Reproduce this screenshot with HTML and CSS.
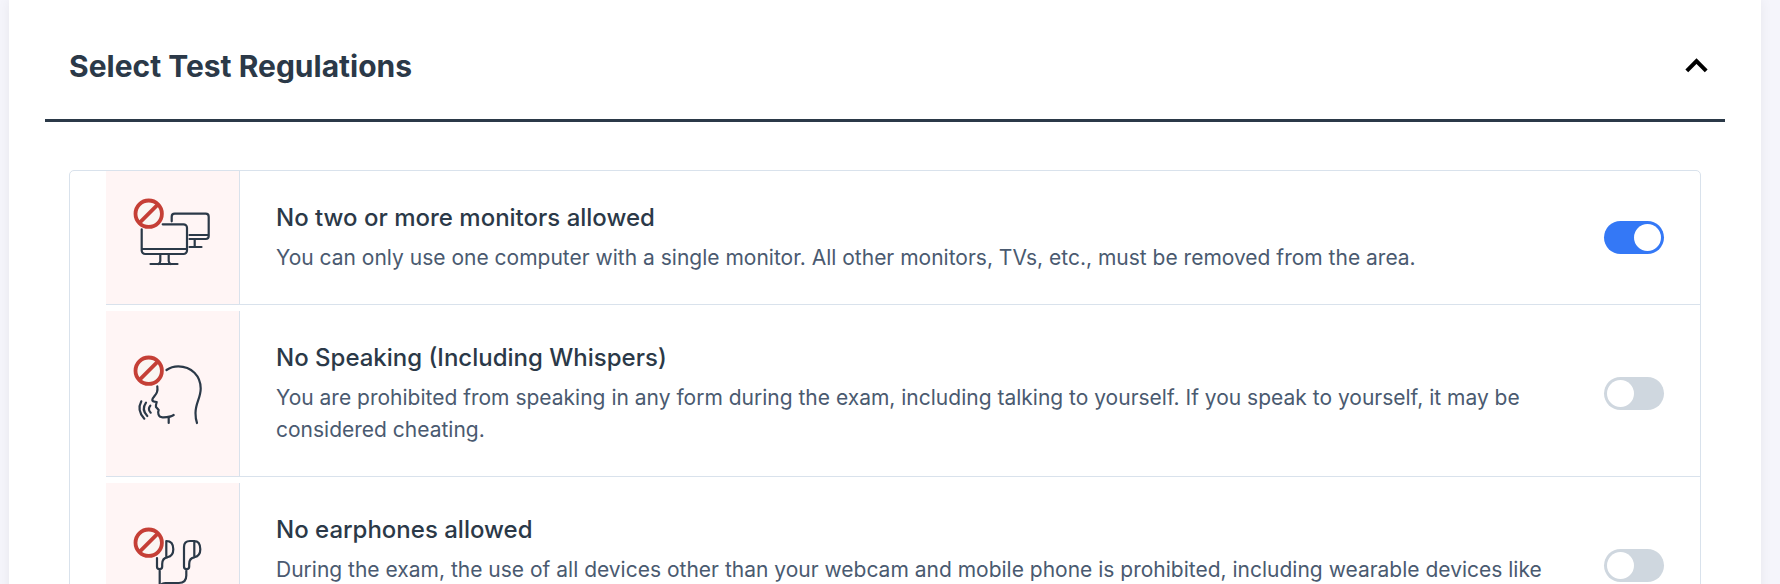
FILE: index.html
```html
<!DOCTYPE html>
<html lang="en">
<head>
  <meta charset="UTF-8">
  <meta name="viewport" content="width=device-width, initial-scale=1.0">
  <title>Select Test Regulations</title>
  <link rel="stylesheet" href="styles.css">
</head>
<body>
  <main class="card">
    <header class="card-header">
      <h1>Select Test Regulations</h1>
      <button type="button" class="collapse" aria-label="Collapse">
        <svg width="24" height="24" viewBox="0 0 24 24" fill="none" stroke="#000" stroke-width="4">
          <path d="M1.800 16.800 11.500 7l9.700 9.800"/>
        </svg>
      </button>
    </header>

    <ul class="rules">
      <li class="rule">
        <div class="rule-icon">
          <svg width="81" height="81" viewBox="0 0 81 81" aria-hidden="true">
            <g class="line">
              <path d="M9.700 32.300V53.500a3.500 3.500 0 0 0 3.500 3.500H51.500a3.500 3.500 0 0 0 3.500-3.500V30.800a3.500 3.500 0 0 0-3.500-3.500H30.700M9.700 52H55"/>
              <path d="M28.300 57v7q0 2-2 3M36.700 57v7q0 2 2 3M18.500 67h27"/>
              <path d="M39.700 24.300V19.700a3 3 0 0 1 3-3H73.700a3 3 0 0 1 3 3V39a3 3 0 0 1-3 3H57.500M57.500 38H76.700M62.700 42v8M57.500 50h12"/>
            </g>
            <g class="ban"><circle cx="16.700" cy="16.700" r="13.200"/><path d="M7.700 25.700l18-18"/></g>
          </svg>
        </div>
        <div class="rule-text">
          <h2 id="rule-monitors">No two or more monitors allowed</h2>
          <p>You can only use one computer with a single monitor. All other monitors, TVs, etc., must be removed from the area.</p>
        </div>
        <input type="checkbox" class="switch" aria-labelledby="rule-monitors" checked>
      </li>

      <li class="rule">
        <div class="rule-icon">
          <svg width="81" height="81" viewBox="0 0 81 81" aria-hidden="true">
            <g class="line">
              <path d="M34.500 17C38 14.500 42 13.300 46.300 13.300C59.500 13.300 68.700 23 68.700 35.500C68.700 45 63.500 50 63.500 60Q63.500 66 65 70"/>
              <path d="M25.300 33.300Q25.800 36.500 25 39C24 42.500 20.300 44.500 20.300 47Q20.300 48.700 24.700 49Q23.700 52 24 54L26.700 57Q25.700 59 26.500 61.500Q27.300 64.300 30.500 64.300Q38 64.500 41.700 62M36.700 64.300V70"/>
              <path d="M18.300 52.700q-3 3.500 .4 7M14 49.700q-5 7 1.300 13.300M9.300 48.300Q4.500 57.500 12.300 65.700"/>
            </g>
            <g class="ban"><circle cx="16.700" cy="17.700" r="13.200"/><path d="M7.700 26.700l18-18"/></g>
          </svg>
        </div>
        <div class="rule-text">
          <h2 id="rule-speaking">No Speaking (Including Whispers)</h2>
          <p>You are prohibited from speaking in any form during the exam, including talking to yourself. If you speak to yourself, it may be considered cheating.</p>
        </div>
        <input type="checkbox" class="switch" aria-labelledby="rule-speaking">
      </li>

      <li class="rule">
        <div class="rule-icon">
          <svg width="81" height="81" viewBox="0 0 81 81" aria-hidden="true">
            <g class="line">
              <path d="M25 33v8.500q0 2.700 2.500 2.700q2.700 0 2.700-2.700V39Q30.200 33 35.500 32.300Q41.300 31 41.300 24.300Q41.300 16 34.300 16V32.300M27.700 44.300V78"/>
              <path d="M52 41.500V22Q52 16 58 16H62Q68.300 16 68.300 24.300Q68.300 31 62.500 32.300Q57.200 33 57.200 39V41.500Q57.200 44.200 54.600 44.200Q52 44.200 52 41.500M62.300 16V32.300M54.300 44.300V50.500Q54.300 58 46.800 58H33.500Q30 58 27.700 61"/>
            </g>
            <g class="ban"><circle cx="16.700" cy="17.700" r="13.200"/><path d="M7.700 26.700l18-18"/></g>
          </svg>
        </div>
        <div class="rule-text">
          <h2 id="rule-earphones">No earphones allowed</h2>
          <p>During the exam, the use of all devices other than your webcam and mobile phone is prohibited, including wearable devices like smartwatches and earphones.</p>
        </div>
        <input type="checkbox" class="switch" aria-labelledby="rule-earphones">
      </li>
    </ul>
  </main>
</body>
</html>
```

FILE: styles.css
```css
* {
  box-sizing: border-box;
}

body {
  margin: 0;
  padding: 0 19px 0 9px;
  background-color: #f5f5fb;
  font-family: Inter, "Liberation Sans", sans-serif;
  color: #2b3948;
}

h1,
h2,
p {
  margin: 0;
}

.card {
  padding: 12px 36px 36px;
  background-color: #fff;
  box-shadow: 0 0 12px rgba(0, 0, 0, 0.06);
}

.card-header {
  display: flex;
  align-items: center;
  justify-content: space-between;
  padding: 36px 16px 35px 24px;
  border-bottom: 3px solid #2b3948;
}

h1 {
  font-size: 30px;
  line-height: 36px;
  font-weight: 700;
}

.collapse {
  display: flex;
  padding: 0;
  border: none;
  background: none;
  cursor: pointer;
}

.rules {
  display: flex;
  flex-direction: column;
  gap: 6px;
  margin: 48px 24px 0;
  padding: 0 0 0 36px;
  list-style: none;
  border: 1px solid #d9e2ec;
  border-radius: 5px;
}

.rule {
  display: flex;
  align-items: center;
  padding-right: 36px;
  border-bottom: 1px solid #d9e2ec;
}

.rule-icon {
  display: flex;
  flex: none;
  align-items: center;
  align-self: stretch;
  padding: 0 26px;
  background-color: #fff5f5;
  border-right: 1px solid #d9e2ec;
}

.line {
  fill: none;
  stroke: #2b3948;
  stroke-width: 2.2;
  stroke-linecap: round;
  stroke-linejoin: round;
}

.ban {
  fill: #faf6f2;
  stroke: #c53f36;
  stroke-width: 3.8;
}

.rule-text {
  flex: 1;
  padding: 30px 36px;
}

h2 {
  margin-bottom: 7px;
  font-size: 24px;
  line-height: 34px;
  font-weight: 500;
}

p {
  font-size: 21px;
  line-height: 32px;
  color: #4a5a70;
}

.switch {
  appearance: none;
  flex: none;
  width: 60px;
  height: 33px;
  margin: 0;
  padding: 3px;
  border-radius: 17px;
  background-color: #cfd7df;
  cursor: pointer;
}

.switch::before {
  content: "";
  display: block;
  width: 27px;
  height: 27px;
  border-radius: 50%;
  background-color: #fff;
}

.switch:checked {
  background-color: #3478f6;
}

.switch:checked::before {
  margin-left: auto;
}
```
